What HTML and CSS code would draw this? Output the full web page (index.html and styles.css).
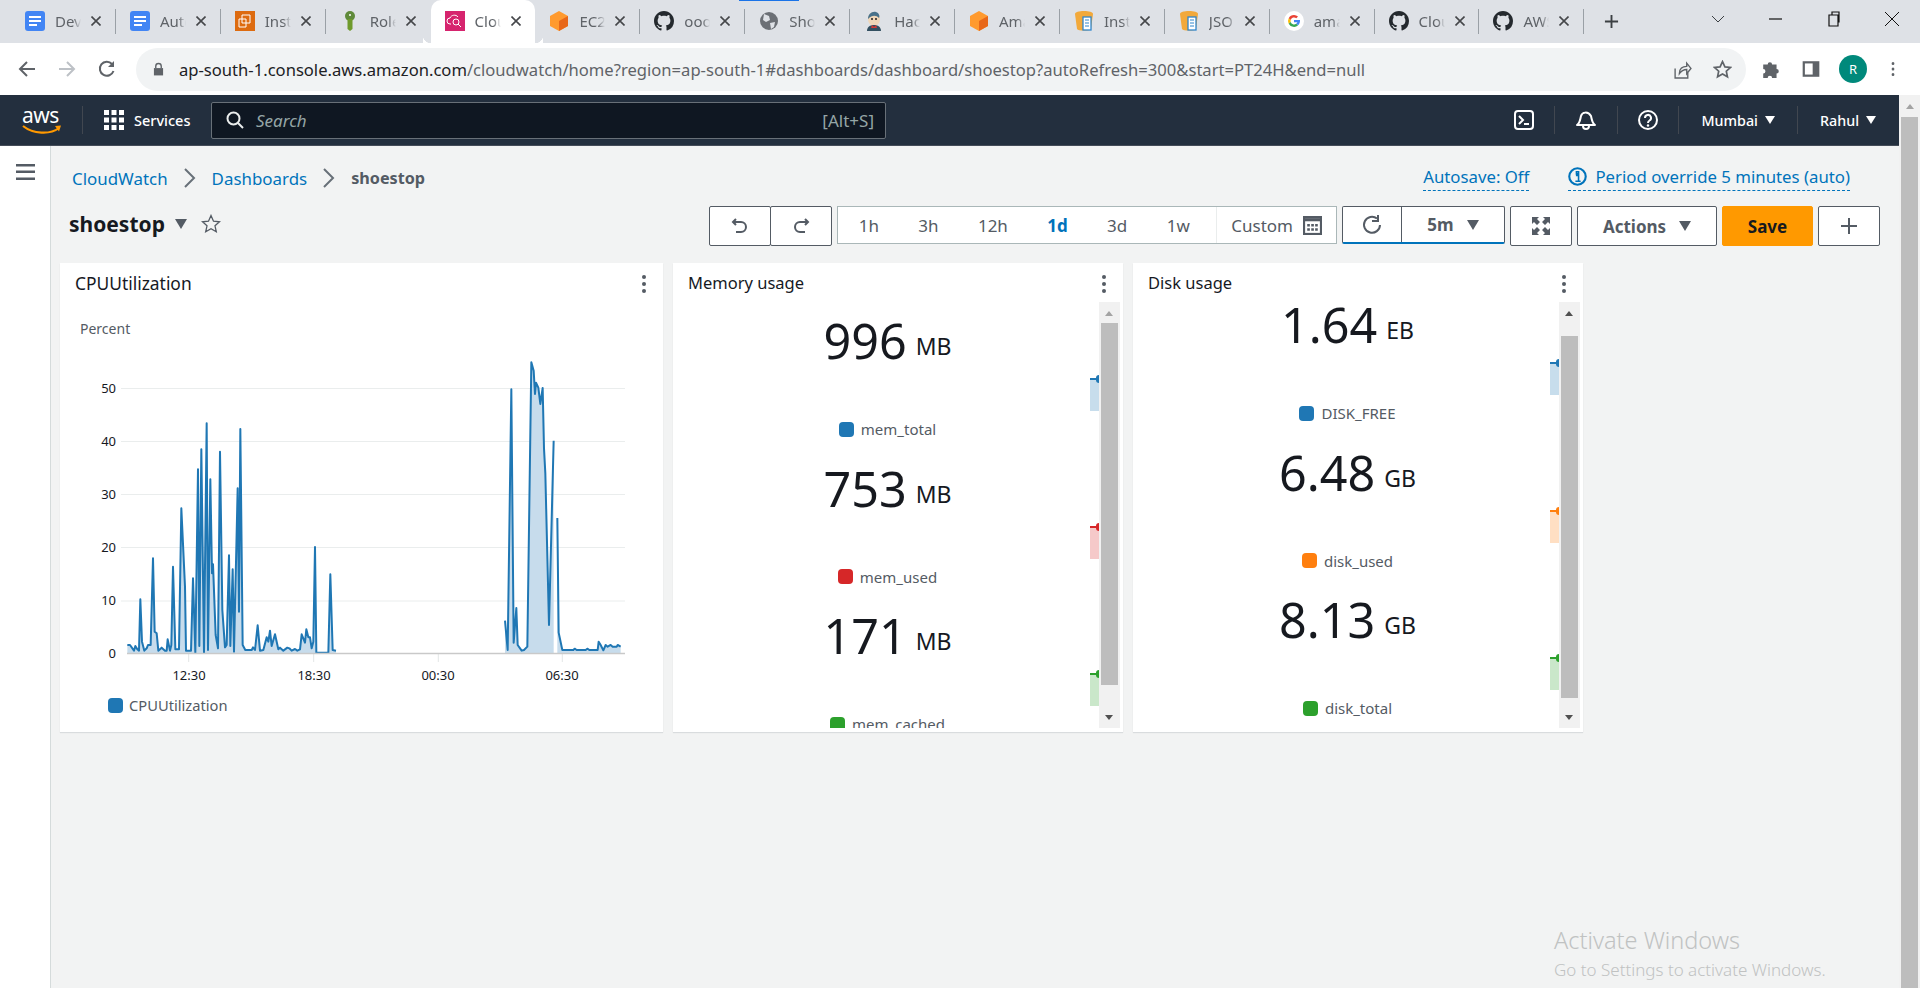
FILE: index.html
```html
<!DOCTYPE html>
<html lang="en">
<head>
    <meta charset="UTF-8">
    <title>CloudWatch - shoestop</title>
    <link rel="stylesheet" href="styles.css">
</head>
<body>
    <svg class="sprite" width="0" height="0">
        <symbol id="i-doc" viewBox="0 0 20 20"><rect width="20" height="20" rx="3" fill="#4285f4"/><path d="M4 5h12v2H4zM4 9h12v2H4zM4 13h8v2H4z" fill="#fff"/></symbol>
        <symbol id="i-ec2" viewBox="0 0 20 20"><rect width="20" height="20" fill="#dd6b10"/><path d="M7 4h8v8H7zM4 8h7v8H4z" fill="none" stroke="#fff" stroke-width="1"/></symbol>
        <symbol id="i-key" viewBox="0 0 20 20"><circle cx="10" cy="5" r="5" fill="#5f8a3a"/><path d="M7.500 8h5v10l-2.500 2-2.500-2z" fill="#6f9a2c"/><circle cx="10" cy="4" r="1" fill="#fff"/></symbol>
        <symbol id="i-cw" viewBox="0 0 20 20"><rect width="20" height="20" fill="#d6246e"/><path d="M6 13H5a3 3 0 0 1 0-6c1-3 6-4 8-1" fill="none" stroke="#fff"/><circle cx="11" cy="11" r="3" fill="none" stroke="#fff"/><path d="M13 13l3 3" stroke="#fff"/></symbol>
        <symbol id="i-box" viewBox="0 0 20 20"><path d="M10 0l9 5v10l-9 5-9-5V5z" fill="#ff9a2e"/><path d="M10 10l9-5v10l-9 5z" fill="#e8681a"/></symbol>
        <symbol id="i-gh" viewBox="0 0 16 16"><path fill="#24292e" d="M8 0C3.58 0 0 3.58 0 8c0 3.540 2.290 6.530 5.470 7.590.4.070.550-.170.550-.380 0-.190-.010-.820-.010-1.490-2.010.370-2.530-.490-2.690-.940-.090-.230-.480-.940-.820-1.130-.280-.150-.680-.520-.010-.530.630-.010 1.080.580 1.230.820.720 1.210 1.870.870 2.330.660.070-.520.280-.870.510-1.070-1.780-.200-3.640-.890-3.640-3.950 0-.870.310-1.590.820-2.150-.080-.200-.360-1.020.080-2.120 0 0 .670-.210 2.200.820.640-.180 1.320-.270 2-.270s1.360.090 2 .270c1.530-1.040 2.200-.820 2.200-.820.440 1.100.160 1.920.080 2.120.510.560.820 1.270.820 2.150 0 3.070-1.870 3.750-3.650 3.950.290.250.540.730.540 1.480 0 1.070-.010 1.930-.010 2.200 0 .210.150.460.550.380A8.010 8.010 0 0 0 16 8c0-4.420-3.580-8-8-8z"/></symbol>
        <symbol id="i-globe" viewBox="0 0 20 20"><circle cx="10" cy="10" r="9" fill="#6b6f75"/><path d="M5 3l5 2 1 4-4 2-3-2zM11 12l5-1-1 5-3 2z" fill="#dee1e6"/></symbol>
        <symbol id="i-jenkins" viewBox="0 0 20 20"><ellipse cx="10" cy="8" rx="6" ry="7" fill="#f0d6b7"/><path d="M4 8c0-5 4-8 8-7 3 1 4 4 3 6-3-3-7-3-11 1z" fill="#49728b"/><path d="M3 20c0-4 3-6 7-6s7 2 7 6z" fill="#335061"/><path d="M8 14l2 2 2-2 1 3H7z" fill="#d33833"/><circle cx="8" cy="8" r="1" fill="#231f20"/><circle cx="12" cy="8" r="1" fill="#231f20"/></symbol>
        <symbol id="i-s3" viewBox="0 0 20 20"><path d="M10 0c5 0 9 1 9 3l-2 15c-1 2-13 2-14 0L1 3c0-2 4-3 9-3z" fill="#f2a93b"/><rect x="9" y="6" width="8" height="13" fill="#fff" stroke="#2f86cc" stroke-width="1.300"/><path d="M11 9h4M11 12h4M11 15h4" stroke="#2f86cc"/></symbol>
        <symbol id="i-google" viewBox="0 0 20 20"><circle cx="10" cy="10" r="10" fill="#fff"/><path d="M10 4a6 6 0 0 1 4 1.500l-1.700 1.700A3.500 3.500 0 0 0 6.700 9L4.700 7.300A6 6 0 0 1 10 4z" fill="#ea4335"/><path d="M4.700 7.300L6.700 9a3.500 3.500 0 0 0 0 2l-2 1.700a6 6 0 0 1 0-5.400z" fill="#fbbc05"/><path d="M4.700 12.700l2-1.700a3.500 3.500 0 0 0 5.500 1.800l1.900 1.500A6 6 0 0 1 4.700 12.700z" fill="#34a853"/><path d="M16 9h-6v2.300h3.400a3 3 0 0 1-1.200 1.500l1.900 1.500c1.300-1.200 2.100-3.300 1.900-5.300z" fill="#4285f4"/></symbol>
        <symbol id="i-x" viewBox="0 0 10 10"><path d="M.5.500l9 9M9.500.500l-9 9" stroke="#45474a" stroke-width="1.600" fill="none"/></symbol>
        <symbol id="i-dots" viewBox="0 0 4 18"><circle cx="2" cy="2" r="2"/><circle cx="2" cy="9" r="2"/><circle cx="2" cy="16" r="2"/></symbol>
    </svg>

    <div class="tabstrip">
        <div class="tab"><svg class="tab-icon"><use href="#i-doc"/></svg><span class="tab-title">Dev</span><svg class="tab-x"><use href="#i-x"/></svg></div>
        <div class="tab"><svg class="tab-icon"><use href="#i-doc"/></svg><span class="tab-title">Auto</span><svg class="tab-x"><use href="#i-x"/></svg></div>
        <div class="tab"><svg class="tab-icon"><use href="#i-ec2"/></svg><span class="tab-title">Insta</span><svg class="tab-x"><use href="#i-x"/></svg></div>
        <div class="tab tab-before-active"><svg class="tab-icon"><use href="#i-key"/></svg><span class="tab-title">Role</span><svg class="tab-x"><use href="#i-x"/></svg></div>
        <div class="tab tab-active"><svg class="tab-icon"><use href="#i-cw"/></svg><span class="tab-title">Clou</span><svg class="tab-x"><use href="#i-x"/></svg></div>
        <div class="tab"><svg class="tab-icon"><use href="#i-box"/></svg><span class="tab-title">EC2</span><svg class="tab-x"><use href="#i-x"/></svg></div>
        <div class="tab"><svg class="tab-icon"><use href="#i-gh"/></svg><span class="tab-title">ooo</span><svg class="tab-x"><use href="#i-x"/></svg></div>
        <div class="tab tab-loading"><svg class="tab-icon"><use href="#i-globe"/></svg><span class="tab-title">Sho</span><svg class="tab-x"><use href="#i-x"/></svg></div>
        <div class="tab"><svg class="tab-icon"><use href="#i-jenkins"/></svg><span class="tab-title">Hac</span><svg class="tab-x"><use href="#i-x"/></svg></div>
        <div class="tab"><svg class="tab-icon"><use href="#i-box"/></svg><span class="tab-title">Ama</span><svg class="tab-x"><use href="#i-x"/></svg></div>
        <div class="tab"><svg class="tab-icon"><use href="#i-s3"/></svg><span class="tab-title">Inst</span><svg class="tab-x"><use href="#i-x"/></svg></div>
        <div class="tab"><svg class="tab-icon"><use href="#i-s3"/></svg><span class="tab-title">JSO</span><svg class="tab-x"><use href="#i-x"/></svg></div>
        <div class="tab"><svg class="tab-icon"><use href="#i-google"/></svg><span class="tab-title">ama</span><svg class="tab-x"><use href="#i-x"/></svg></div>
        <div class="tab"><svg class="tab-icon"><use href="#i-gh"/></svg><span class="tab-title">Clou</span><svg class="tab-x"><use href="#i-x"/></svg></div>
        <div class="tab"><svg class="tab-icon"><use href="#i-gh"/></svg><span class="tab-title">AWS</span><svg class="tab-x"><use href="#i-x"/></svg></div>
        <svg class="new-tab" viewBox="0 0 16 16"><path d="M8 1v14M1 8h14" stroke="#3c4043" stroke-width="2"/></svg>
        <div class="window-controls">
            <svg class="win-btn" viewBox="0 0 16 16"><path d="M2 5l6 6 6-6" fill="none" stroke="#3c4043"/></svg>
            <svg class="win-btn" viewBox="0 0 16 16"><path d="M1 8h13" stroke="#111" stroke-width="1.200"/></svg>
            <svg class="win-btn" viewBox="0 0 16 16"><path d="M3 4h9v11H3zM6 4V1h7v10h-1" fill="none" stroke="#111" stroke-width="1.200"/></svg>
            <svg class="win-btn" viewBox="0 0 16 16"><path d="M1 1l14 14M15 1L1 15" stroke="#111"/></svg>
        </div>
    </div>

    <div class="toolbar">
        <svg class="tool-icon" viewBox="0 0 18 18"><path d="M17 9H3M9 2L2 9l7 7" fill="none" stroke="#5f6368" stroke-width="2"/></svg>
        <svg class="tool-icon" viewBox="0 0 18 18"><path d="M1 9h14M9 2l7 7-7 7" fill="none" stroke="#bdc1c6" stroke-width="2"/></svg>
        <svg class="tool-icon" viewBox="0 0 18 18"><path d="M15.500 11A7 7 0 1 1 14 4" fill="none" stroke="#5f6368" stroke-width="2"/><path d="M16 1v6h-6z" fill="#5f6368"/></svg>
        <div class="omnibox">
            <svg class="lock" viewBox="0 0 12 14"><path d="M1 6h10v8H1z" fill="#5f6368"/><path d="M3 6V4a3 3 0 0 1 6 0v2" fill="none" stroke="#5f6368" stroke-width="1.500"/></svg>
            <span class="url"><span class="url-host">ap-south-1.console.aws.amazon.com</span>/cloudwatch/home?region=ap-south-1#dashboards/dashboard/shoestop?autoRefresh=300&amp;start=PT24H&amp;end=null</span>
            <svg class="omni-icon" viewBox="0 0 18 18"><path d="M2 8v9h12v-5" fill="none" stroke="#5f6368" stroke-width="1.300"/><path d="M6 13c0-5 3-7 7-7V3l4 5-4 5V9c-3 0-5 1-7 4z" fill="none" stroke="#5f6368" stroke-width="1.300"/></svg>
            <svg class="omni-icon" viewBox="0 0 18 18"><path d="M9 1.500l2.300 5 5.200.600-3.900 3.500 1.100 5.300L9 13.200l-4.700 2.700 1.100-5.300L1.500 7.100l5.200-.600z" fill="none" stroke="#5f6368" stroke-width="1.600"/></svg>
        </div>
        <svg class="ext-icon" viewBox="0 0 18 18"><path d="M2 5h4a2 2 0 0 1 4 0h4v4a2 2 0 0 1 0 4v4h-4a2 2 0 0 0-4 0H2v-4a2 2 0 0 0 0-4z" fill="#5f6368"/></svg>
        <svg class="ext-icon" viewBox="0 0 18 18"><rect x="1.500" y="2" width="15" height="14" fill="#5f6368"/><rect x="3.500" y="4" width="7" height="10" fill="#fff"/></svg>
        <div class="avatar">R</div>
        <svg class="menu-dots" viewBox="0 0 4 18" fill="#5f6368"><use href="#i-dots"/></svg>
    </div>

    <div class="viewport">
        <div class="app">
            <nav class="topnav">
                <div class="aws-logo">
                    <span class="aws-word">aws</span>
                    <svg class="aws-smile" viewBox="0 0 40 11"><path d="M1 1c10 8 27 9 36 2" fill="none" stroke="#ff9900" stroke-width="2.200"/><path d="M33 1l6-.500-2 6z" fill="#ff9900"/></svg>
                </div>
                <div class="services">
                    <svg class="grid-icon" viewBox="0 0 20 20" fill="#fff"><path d="M0 0h5v5H0zM7.500 0h5v5h-5zM15 0h5v5h-5zM0 7.500h5v5H0zM7.500 7.500h5v5h-5zM15 7.500h5v5h-5zM0 15h5v5H0zM7.500 15h5v5h-5zM15 15h5v5h-5z"/></svg>
                    <span>Services</span>
                </div>
                <div class="searchbox">
                    <svg class="search-icon" viewBox="0 0 18 18"><circle cx="7.500" cy="7.500" r="6" fill="none" stroke="#eaeded" stroke-width="2"/><path d="M12 12l5 5" stroke="#eaeded" stroke-width="2"/></svg>
                    <span class="search-text">Search</span>
                    <span class="search-key">[Alt+S]</span>
                </div>
                <div class="nav-right">
                    <div class="nav-item nav-cloudshell">
                        <svg class="nav-icon" viewBox="0 0 20 20"><rect x="1" y="1" width="18" height="18" rx="3" fill="none" stroke="#fff" stroke-width="2"/><path d="M5 6l4 4-4 4M10 14h5" fill="none" stroke="#fff" stroke-width="2"/></svg>
                    </div>
                    <div class="nav-item nav-bell">
                        <svg class="nav-icon" viewBox="0 0 20 20"><path d="M1 15c3-2 3-5 4-9s7-5 10 0c1 4 1 7 4 9z" fill="none" stroke="#fff" stroke-width="2" stroke-linejoin="round"/><path d="M7 16a3 3 0 0 0 6 0" fill="none" stroke="#fff" stroke-width="2"/></svg>
                    </div>
                    <div class="nav-item nav-help">
                        <svg class="nav-icon" viewBox="0 0 20 20"><circle cx="10" cy="10" r="9" fill="none" stroke="#fff" stroke-width="2"/><path d="M7 8a3 3 0 1 1 4.500 2.500c-1 .600-1.500 1-1.500 2.500" fill="none" stroke="#fff" stroke-width="2"/><circle cx="10" cy="15.500" r="1.200" fill="#fff"/></svg>
                    </div>
                    <div class="nav-item nav-region"><span>Mumbai</span><i class="caret"></i></div>
                    <div class="nav-item nav-user"><span>Rahul</span><i class="caret"></i></div>
                </div>
            </nav>

            <div class="page">
                <aside class="sidebar">
                    <svg class="hamburger" viewBox="0 0 19 16" fill="#545b64"><path d="M0 0h19v2.500H0zM0 6.500h19V9H0zM0 13.500h19V16H0z"/></svg>
                </aside>
                <main class="main">
                    <div class="crumb-row">
                        <a class="crumb">CloudWatch</a>
                        <svg class="crumb-sep" viewBox="0 0 12 20"><path d="M1 1l9 9-9 9" fill="none" stroke="#687078" stroke-width="2"/></svg>
                        <a class="crumb">Dashboards</a>
                        <svg class="crumb-sep" viewBox="0 0 12 20"><path d="M1 1l9 9-9 9" fill="none" stroke="#687078" stroke-width="2"/></svg>
                        <span class="crumb-current">shoestop</span>
                        <a class="autosave">Autosave: Off</a>
                        <a class="period">
                            <svg class="info-icon" viewBox="0 0 18 18"><circle cx="9" cy="9" r="7.800" fill="none" stroke="#0073bb" stroke-width="2"/><path d="M7.500 8h2.500v5M7 13.500h5M8 4.500h2v2H8z" fill="none" stroke="#0073bb" stroke-width="1.500"/></svg>
                            Period override 5 minutes (auto)
                        </a>
                    </div>

                    <div class="title-row">
                        <h1 class="dash-title">shoestop</h1>
                        <i class="title-caret"></i>
                        <svg class="title-star" viewBox="0 0 20 20"><path d="M10 1.500l2.500 5.700 6 .600-4.500 4 1.300 6L10 14.700l-5.300 3.100 1.300-6-4.500-4 6-.600z" fill="none" stroke="#545b64" stroke-width="1.300"/></svg>

                        <div class="actions">
                            <div class="btn-pair">
                                <button class="btn btn-icon"><svg class="btn-svg" viewBox="0 0 18 18"><path d="M5 2L2 5l3 3" fill="none" stroke="#545b64" stroke-width="2"/><path d="M3 5h7a4.500 4.500 0 0 1 0 10H5" fill="none" stroke="#545b64" stroke-width="2"/></svg></button>
                                <button class="btn btn-icon"><svg class="btn-svg" viewBox="0 0 18 18"><path d="M13 2l3 3-3 3" fill="none" stroke="#545b64" stroke-width="2"/><path d="M15 5H8a4.500 4.500 0 0 0 0 10h5" fill="none" stroke="#545b64" stroke-width="2"/></svg></button>
                            </div>
                            <div class="range">
                                <span class="range-item">1h</span>
                                <span class="range-item">3h</span>
                                <span class="range-item">12h</span>
                                <span class="range-item range-on">1d</span>
                                <span class="range-item">3d</span>
                                <span class="range-item">1w</span>
                                <span class="range-custom">Custom
                                    <svg class="cal-icon" viewBox="0 0 18 18"><rect x="1" y="1" width="16" height="16" fill="none" stroke="#545b64" stroke-width="2"/><path d="M1 2h16v3H1z" fill="#545b64"/><path d="M4 7.500h2.500V10H4zM7.800 7.500h2.500V10H7.800zM11.500 7.500H14V10h-2.500zM4 11.500h2.500V14H4zM7.800 11.500h2.500V14H7.800zM11.500 11.500H14V14h-2.500z" fill="#545b64"/></svg>
                                </span>
                            </div>
                            <div class="refresh-group">
                                <button class="btn-refresh"><svg class="refresh-svg" viewBox="0 0 20 20"><path d="M15 3.500A8 8 0 1 0 18 10" fill="none" stroke="#545b64" stroke-width="2"/><path d="M16 0v6h-6" fill="none" stroke="#545b64" stroke-width="2"/></svg></button>
                                <button class="btn-interval">5m<i class="btn-caret"></i></button>
                            </div>
                            <button class="btn btn-icon btn-full"><svg class="btn-svg" viewBox="0 0 18 18" fill="#545b64"><path d="M0 0h7L5 2l3 3-3 3-3-3-2 2zM18 0v7l-2-2-3 3-3-3 3-3-2-2zM0 18v-7l2 2 3-3 3 3-3 3 2 2zM18 18h-7l2-2-3-3 3-3 3 3 2-2z"/></svg></button>
                            <button class="btn btn-actions">Actions<i class="btn-caret"></i></button>
                            <button class="btn btn-save">Save</button>
                            <button class="btn btn-icon btn-add"><svg class="btn-svg" viewBox="0 0 18 18"><path d="M9 1v16M1 9h16" stroke="#545b64" stroke-width="2"/></svg></button>
                        </div>
                    </div>

                    <div class="widgets">
                        <section class="widget widget-cpu">
                            <header class="widget-head"><span class="widget-title">CPUUtilization</span><svg class="widget-menu" viewBox="0 0 4 18" fill="#545b64"><use href="#i-dots"/></svg></header>
                            <svg class="chart" viewBox="60 302 603 429">
                                <text class="chart-unit" x="80" y="334">Percent</text>
                                <g class="grid">
                                    <path d="M121 388.500H625M121 441.500H625M121 494.500H625M121 547.500H625M121 601H625"/>
                                </g>
                                <g class="ylabels">
                                    <text x="116" y="393">50</text>
                                    <text x="116" y="446">40</text>
                                    <text x="116" y="499">30</text>
                                    <text x="116" y="552">20</text>
                                    <text x="116" y="605">10</text>
                                    <text x="116" y="658">0</text>
                                </g>
                                <path class="ticks" d="M188.700 654v8M313.700 654v8M438.300 654v8M562.300 654v8"/>
                                <g class="xlabels">
                                    <text x="189" y="680">12:30</text>
                                    <text x="314" y="680">18:30</text>
                                    <text x="438" y="680">00:30</text>
                                    <text x="562" y="680">06:30</text>
                                </g>
                                <g transform="translate(50 320) scale(.33333)">
                                    <polygon class="area" points="232,1000 232,975 240,975 252,992 256,978 262,988 267,992 271,838 276,965 283,992 290,985 294,975 302,975 309,715 314,935 320,940 325,992 335,983 345,992 350,992 353,958 360,992 364,975 369,740 376,988 387,988 394,565 405,800 408,992 423,992 429,775 436,998 444,448 448,978 454,388 462,998 470,310 474,990 481,478 486,760 489,733 497,945 504,985 510,395 517,870 525,982 530,975 537,706 541,978 548,748 552,995 563,505 567,875 571,327 578,975 586,990 605,990 609,982 615,990 623,916 630,992 640,990 650,952 655,965 660,932 665,978 675,943 685,988 690,983 700,992 712,983 718,985 725,992 735,987 742,992 750,988 755,943 765,968 769,928 775,952 780,952 785,985 790,965 795,681 799,998 835,998 841,763 848,990 858,992 858,1000"/>
                                    <polyline class="line" points="232,975 240,975 252,992 256,978 262,988 267,992 271,838 276,965 283,992 290,985 294,975 302,975 309,715 314,935 320,940 325,992 335,983 345,992 350,992 353,958 360,992 364,975 369,740 376,988 387,988 394,565 405,800 408,992 423,992 429,775 436,998 444,448 448,978 454,388 462,998 470,310 474,990 481,478 486,760 489,733 497,945 504,985 510,395 517,870 525,982 530,975 537,706 541,978 548,748 552,995 563,505 567,875 571,327 578,975 586,990 605,990 609,982 615,990 623,916 630,992 640,990 650,952 655,965 660,932 665,978 675,943 685,988 690,983 700,992 712,983 718,985 725,992 735,987 742,992 750,988 755,943 765,968 769,928 775,952 780,952 785,985 790,965 795,681 799,998 835,998 841,763 848,990 858,992"/>
                                </g>
                                <g transform="translate(350 320) scale(.33333)">
                                    <polygon class="area" points="465,1000 465,902 473,990 484,208 491,968 499,864 503,975 515,992 522,990 532,980 544,127 551,152 555,222 558,188 565,203 571,252 578,204 582,385 586,460 597,915 611,362 611,1000"/>
                                    <polygon class="area" points="622,1000 622,594 626,938 637,990 670,990 674,986 680,990 707,990 712,986 718,990 743,990 746,965 752,975 760,991 767,975 773,980 782,975 788,980 800,980 803,975 812,980 812,1000"/>
                                    <polyline class="line" points="465,902 473,990 484,208 491,968 499,864 503,975 515,992 522,990 532,980 544,127 551,152 555,222 558,188 565,203 571,252 578,204 582,385 586,460 597,915 611,362"/>
                                    <polyline class="line" points="622,594 626,938 637,990 670,990 674,986 680,990 707,990 712,986 718,990 743,990 746,965 752,975 760,991 767,975 773,980 782,975 788,980 800,980 803,975 812,980"/>
                                </g>
                                <path class="baseline" d="M127 653.500H625"/>
                                <rect class="legend-swatch" x="108" y="698" width="15" height="15" rx="4"/>
                                <text class="legend-text" x="129" y="711">CPUUtilization</text>
                            </svg>
                        </section>

                        <section class="widget widget-stat">
                            <header class="widget-head"><span class="widget-title">Memory usage</span><svg class="widget-menu" viewBox="0 0 4 18" fill="#545b64"><use href="#i-dots"/></svg></header>
                            <div class="stat-view">
                                <div class="stat-list">
                                    <div class="stat"><div class="stat-value">996<span class="stat-unit">MB</span></div><div class="stat-legend"><i class="swatch blue"></i>mem_total</div><div class="spark blue"></div></div>
                                    <div class="stat"><div class="stat-value">753<span class="stat-unit">MB</span></div><div class="stat-legend"><i class="swatch red"></i>mem_used</div><div class="spark red"></div></div>
                                    <div class="stat"><div class="stat-value">171<span class="stat-unit">MB</span></div><div class="stat-legend"><i class="swatch green"></i>mem_cached</div><div class="spark green"></div></div>
                                </div>
                                <div class="vscroll vscroll-mem"><i class="arrow-up arrow-dim"></i><div class="vthumb"></div><i class="arrow-down"></i></div>
                            </div>
                        </section>

                        <section class="widget widget-stat">
                            <header class="widget-head"><span class="widget-title">Disk usage</span><svg class="widget-menu" viewBox="0 0 4 18" fill="#545b64"><use href="#i-dots"/></svg></header>
                            <div class="stat-view">
                                <div class="stat-list stat-list-scrolled">
                                    <div class="stat"><div class="stat-value">1.64<span class="stat-unit">EB</span></div><div class="stat-legend"><i class="swatch blue"></i>DISK_FREE</div><div class="spark blue"></div></div>
                                    <div class="stat"><div class="stat-value">6.48<span class="stat-unit">GB</span></div><div class="stat-legend"><i class="swatch orange"></i>disk_used</div><div class="spark orange"></div></div>
                                    <div class="stat"><div class="stat-value">8.13<span class="stat-unit">GB</span></div><div class="stat-legend"><i class="swatch green"></i>disk_total</div><div class="spark green"></div></div>
                                </div>
                                <div class="vscroll vscroll-disk"><i class="arrow-up"></i><div class="vthumb"></div><i class="arrow-down"></i></div>
                            </div>
                        </section>
                    </div>
                    <div class="activate">
                        <div class="activate-title">Activate Windows</div>
                        <div class="activate-sub">Go to Settings to activate Windows.</div>
                    </div>
                </main>
            </div>
        </div>
        <div class="page-scroll">
            <i class="arrow-up arrow-dim"></i>
            <div class="page-thumb"></div>
        </div>
    </div>
</body>
</html>
```

FILE: styles.css
```css
* {
    box-sizing: border-box;
}

html, body {
    margin: 0;
    height: 100%;
    overflow: hidden;
}

body {
    font-family: "Noto Sans", sans-serif;
    background: #fff;
    color: #16191f;
    display: flex;
    flex-direction: column;
}

.sprite {
    position: absolute;
}

/* browser chrome */
.tabstrip {
    height: 43px;
    flex: none;
    background: #dee1e6;
    display: flex;
    padding-left: 11px;
    position: relative;
}

.tab {
    width: 104.9px;
    height: 43px;
    flex: none;
    display: flex;
    align-items: center;
    padding: 0 0 2px 14px;
    position: relative;
}

.tab::after {
    content: "";
    position: absolute;
    right: 0;
    top: 9px;
    width: 1px;
    height: 25px;
    background: #9aa0a6;
}

.tab-before-active::after {
    display: none;
}

.tab-active {
    background: #fff;
    border-radius: 10px 10px 0 0;
}

.tab-active::before,
.tab-active::after {
    content: "";
    position: absolute;
    bottom: 0;
    top: auto;
    width: 8px;
    height: 8px;
    background: radial-gradient(circle at 0 0, #dee1e6 8px, #fff 8.5px);
}

.tab-active::before {
    left: -8px;
    transform: scaleX(-1);
}

.tab-active::after {
    right: -8px;
}

.tab-loading::before {
    content: "";
    position: absolute;
    left: -6px;
    top: 0;
    width: 60px;
    height: 1px;
    background: #1a73e8;
}

.tab-icon {
    width: 20px;
    height: 20px;
    flex: none;
}

.tab-title {
    width: 26px;
    margin-left: 10px;
    font-size: 15px;
    color: #5f6368;
    white-space: nowrap;
    overflow: hidden;
    -webkit-mask-image: linear-gradient(to right, #000 70%, transparent);
    mask-image: linear-gradient(to right, #000 70%, transparent);
}

.tab-x {
    width: 10px;
    height: 10px;
    margin-left: 10px;
    flex: none;
}

.new-tab {
    width: 15px;
    height: 15px;
    margin: 14px 0 0 20px;
}

.window-controls {
    display: flex;
    margin-left: auto;
    padding: 11px 20px 0 0;
    height: 43px;
    gap: 42px;
}

.win-btn {
    width: 16px;
    height: 16px;
}

.toolbar {
    height: 52px;
    flex: none;
    background: #fff;
    display: flex;
    align-items: center;
    padding-left: 18px;
}

.tool-icon {
    width: 18px;
    height: 18px;
    margin-right: 22px;
    flex: none;
}

.omnibox {
    width: 1610px;
    height: 43px;
    margin-left: -2px;
    background: #f1f3f4;
    border-radius: 22px;
    display: flex;
    align-items: center;
    padding-left: 17px;
    flex: none;
}

.lock {
    width: 11px;
    height: 14px;
    flex: none;
}

.url {
    margin-left: 15px;
    font-size: 16.6px;
    color: #5f6368;
    white-space: nowrap;
}

.url-host {
    color: #202124;
}

.omni-icon {
    width: 19px;
    height: 19px;
    flex: none;
    margin-left: 21px;
}

.omni-icon:nth-of-type(2) {
    margin-left: auto;
}

.omni-icon:last-child {
    margin-right: 14px;
}

.ext-icon {
    width: 20px;
    height: 20px;
    flex: none;
    margin-left: 15px;
}

.ext-icon + .ext-icon {
    margin-left: 20px;
}

.avatar {
    width: 28px;
    height: 28px;
    margin-left: 18px;
    border-radius: 50%;
    background: #00897b;
    color: #fff;
    font-size: 13px;
    text-align: center;
    line-height: 28px;
    flex: none;
}

.menu-dots {
    width: 4px;
    height: 14px;
    margin-left: 24px;
    flex: none;
}

/* aws page */
.viewport {
    flex: 1;
    display: flex;
    min-height: 0;
}

.app {
    flex: 1;
    display: flex;
    flex-direction: column;
    min-width: 0;
    background: #f2f3f3;
}

.page-scroll {
    width: 21px;
    flex: none;
    background: #f1f1f1;
    padding-top: 9px;
    display: flex;
    flex-direction: column;
    align-items: center;
}

.page-thumb {
    width: 17px;
    flex: 1;
    margin-top: 8px;
    background: #bdbdbd;
}

.topnav {
    height: 51px;
    flex: none;
    background: #232f3e;
    border-bottom: 1px solid #444c58;
    display: flex;
    align-items: center;
    color: #fff;
    font-size: 14.5px;
}

.aws-logo {
    width: 83px;
    height: 28px;
    padding-left: 22px;
    border-right: 1px solid #414750;
    flex: none;
    position: relative;
}

.aws-word {
    display: block;
    font-size: 21px;
    line-height: 19px;
    letter-spacing: -.5px;
}

.aws-smile {
    display: block;
    width: 40px;
    height: 11px;
}

.services {
    width: 128px;
    display: flex;
    align-items: center;
    flex: none;
    padding-left: 21px;
    font-weight: 500;
}

.grid-icon {
    width: 20px;
    height: 20px;
    margin-right: 10px;
}

.searchbox {
    width: 675px;
    height: 37px;
    flex: none;
    background: #0f1722;
    border: 1px solid #687078;
    border-radius: 2px;
    display: flex;
    align-items: center;
    padding: 0 11px 0 14px;
    font-size: 17px;
    color: #95a5a6;
}

.search-icon {
    width: 18px;
    height: 18px;
    margin-right: 12px;
}

.search-text {
    font-style: italic;
}

.search-key {
    margin-left: auto;
}

.nav-right {
    margin-left: auto;
    display: flex;
    align-items: center;
    height: 28px;
    font-size: 14.3px;
}

.nav-item {
    height: 28px;
    display: flex;
    align-items: center;
    border-left: 1px solid #414750;
    font-weight: 500;
}

.nav-cloudshell {
    border-left: 0;
    padding-right: 20px;
}

.nav-bell {
    padding: 0 21px;
}

.nav-help {
    padding: 0 20px;
}

.nav-region {
    padding: 0 22px;
}

.nav-user {
    padding: 0 23px 0 22px;
}

.nav-icon {
    width: 20px;
    height: 20px;
}

.caret {
    margin-left: 7px;
    border-left: 5px solid transparent;
    border-right: 5px solid transparent;
    border-top: 8px solid #fff;
}

.page {
    flex: 1;
    display: flex;
    min-height: 0;
}

.sidebar {
    width: 51px;
    flex: none;
    background: #fff;
    border-right: 1px solid #d5dbdb;
    padding: 18px 0 0 16px;
}

.hamburger {
    display: block;
    width: 19px;
    height: 16px;
}

.main {
    flex: 1;
    min-width: 0;
    padding: 21px 0 0 9px;
    position: relative;
}

.crumb-row {
    display: flex;
    align-items: center;
    height: 22px;
    padding: 0 49px 0 12px;
    font-size: 16.9px;
    white-space: nowrap;
}

.crumb {
    color: #0073bb;
}

.crumb-sep {
    width: 12px;
    height: 20px;
    margin: 0 16px;
}

.crumb-current {
    font-weight: 700;
    color: #545b64;
    font-size: 16.2px;
}

.autosave {
    margin-left: auto;
    color: #0073bb;
    border-bottom: 1px dashed #0073bb;
    padding-bottom: 2px;
    font-size: 16.8px;
}

.period {
    margin-left: 39px;
    color: #0073bb;
    border-bottom: 1px dashed #0073bb;
    padding-bottom: 2px;
    font-size: 16.8px;
    display: flex;
    align-items: center;
}

.info-icon {
    width: 19px;
    height: 19px;
    margin-right: 8px;
}

.title-row {
    display: flex;
    align-items: center;
    height: 40px;
    margin-top: 17px;
    padding: 0 19px 0 9px;
}

.dash-title {
    margin: 0 0 5px;
    font-size: 21px;
    line-height: 30px;
    font-weight: 700;
}

.title-caret {
    margin: 0 0 5px 10px;
    border-left: 6px solid transparent;
    border-right: 6px solid transparent;
    border-top: 10px solid #545b64;
}

.title-star {
    width: 20px;
    height: 20px;
    margin: 0 0 5px 14px;
}

.actions {
    margin-left: auto;
    display: flex;
    gap: 5px;
    align-items: flex-start;
}

.btn {
    height: 40px;
    background: #fff;
    border: 1px solid #545b64;
    border-radius: 2px;
    font-family: inherit;
    font-size: 17px;
    font-weight: 700;
    color: #545b64;
    padding: 0;
    display: flex;
    align-items: center;
    justify-content: center;
}

.btn-pair {
    display: flex;
}

.btn-pair .btn {
    width: 62px;
}

.btn-pair .btn + .btn {
    margin-left: -1px;
}

.btn-svg {
    width: 18px;
    height: 18px;
}

.btn-full {
    width: 62px;
}

.btn-actions {
    width: 140px;
}

.btn-save {
    width: 91px;
    background: #ff9900;
    border-color: #ff9900;
    color: #16191f;
}

.btn-add {
    width: 62px;
}

.btn-caret {
    margin-left: 13px;
    border-left: 6px solid transparent;
    border-right: 6px solid transparent;
    border-top: 10px solid #545b64;
}

.range {
    width: 500px;
    height: 38px;
    background: #fff;
    border: 1px solid #aab7b8;
    display: flex;
    align-items: center;
    font-size: 17px;
    color: #545b64;
}

.range-item {
    padding: 0 19.7px;
}

.range-item:first-child {
    margin-left: 1px;
}

.range-on {
    color: #0073bb;
    font-weight: 700;
}

.range-custom {
    margin-left: auto;
    height: 100%;
    padding: 0 14px 0 14px;
    border-left: 1px solid #eaeded;
    display: flex;
    align-items: center;
    gap: 10px;
}

.cal-icon {
    width: 19px;
    height: 19px;
}

.refresh-group {
    display: flex;
    height: 38px;
    border: 1px solid #545b64;
    border-bottom: 2px solid #0073bb;
    border-radius: 2px;
    background: #fff;
}

.btn-refresh {
    width: 59px;
    border: 0;
    border-right: 1px solid #545b64;
    background: none;
    padding: 0;
}

.btn-interval {
    width: 102px;
    border: 0;
    background: none;
    padding: 0;
    font-family: inherit;
    font-size: 17px;
    font-weight: 700;
    color: #545b64;
    display: flex;
    align-items: center;
    justify-content: center;
}

.refresh-svg {
    width: 20px;
    height: 20px;
    display: block;
    margin: 0 auto;
}

/* widgets */
.widgets {
    display: flex;
    gap: 10px;
    margin-top: 17px;
}

.widget {
    height: 469px;
    background: #fff;
    box-shadow: 0 1px 1px rgba(0, 22, 37, .1);
    display: flex;
    flex-direction: column;
    overflow: hidden;
}

.widget-cpu {
    width: 603px;
}

.widget-stat {
    width: 450px;
}

.widget-head {
    height: 39px;
    flex: none;
    display: flex;
    align-items: center;
    justify-content: space-between;
    padding: 3px 17px 0 15px;
}

.widget-title {
    margin-top: -3px;
    font-size: 16.5px;
    color: #16191f;
}

.widget-cpu .widget-title {
    font-size: 17.4px;
}

.widget-menu {
    width: 4px;
    height: 18px;
}

.chart {
    display: block;
    width: 603px;
    height: 429px;
    font-family: "Noto Sans", sans-serif;
}

.chart-unit {
    font-size: 14px;
    fill: #545b64;
}

.grid path {
    stroke: #eaeded;
    stroke-width: 1;
    fill: none;
}

.ylabels text {
    font-size: 13px;
    text-anchor: end;
    fill: #16191f;
}

.xlabels text {
    font-size: 13px;
    text-anchor: middle;
    fill: #16191f;
}

.ticks {
    stroke: #e3e6e6;
    fill: none;
}

.baseline {
    stroke: #c9c9c9;
    stroke-width: 1.500;
    fill: none;
}

.area {
    fill: #c7dcec;
}

.line {
    fill: none;
    stroke: #1f77b4;
    stroke-width: 6;
    stroke-linejoin: round;
}

.legend-swatch {
    fill: #1f77b4;
}

.legend-text {
    font-size: 14.7px;
    fill: #545b64;
}

.stat-view {
    height: 426px;
    flex: none;
    position: relative;
    overflow: hidden;
    margin-right: 3px;
}

.stat-list {
    width: 426px;
    padding-top: 10px;
}

.stat-list-scrolled {
    padding-top: 0;
    margin-top: -6px;
}

.stat {
    height: 147.700px;
    position: relative;
    text-align: center;
}

.stat-value {
    height: 56px;
    font-size: 48.500px;
    line-height: 56px;
    color: #16191f;
    white-space: nowrap;
    padding-left: 3px;
}

.stat-unit {
    font-size: 23px;
    margin-left: 9px;
    vertical-align: 4px;
}

.stat-legend {
    height: 18px;
    margin-top: 52px;
    line-height: 18px;
    font-size: 15px;
    color: #545b64;
    display: flex;
    justify-content: center;
    align-items: center;
    gap: 7px;
    padding-left: 3px;
}

.swatch {
    width: 15px;
    height: 15px;
    border-radius: 4px;
    background: currentColor;
}

.spark {
    position: absolute;
    right: 0;
    top: 66px;
    width: 9px;
    height: 33px;
    border-top: 2px solid currentColor;
}

.spark::before {
    content: "";
    position: absolute;
    inset: 0;
    background: currentColor;
    opacity: .25;
}

.spark::after {
    content: "";
    position: absolute;
    right: 0;
    top: -5px;
    width: 3px;
    height: 8px;
    border-radius: 4px 0 0 4px;
    background: currentColor;
}

.blue { color: #1f77b4; }
.red { color: #d62728; }
.green { color: #2ca02c; }
.orange { color: #ff7f0e; }

.stat-legend .swatch.blue { background: #1f77b4; }
.stat-legend .swatch.red { background: #d62728; }
.stat-legend .swatch.green { background: #2ca02c; }
.stat-legend .swatch.orange { background: #ff7f0e; }

.vscroll {
    position: absolute;
    right: 0;
    top: 0;
    bottom: 0;
    width: 21px;
    background: #f1f1f1;
}

.vscroll .arrow-up {
    position: absolute;
    left: 6px;
    top: 9px;
}

.vscroll .arrow-down {
    position: absolute;
    left: 6px;
    bottom: 8px;
}

.vthumb {
    position: absolute;
    left: 2px;
    width: 17px;
    background: #bdbdbd;
}

.vscroll-mem .vthumb {
    top: 21px;
    height: 362px;
}

.vscroll-disk .vthumb {
    top: 34px;
    height: 362px;
}

.arrow-up {
    display: block;
    border-left: 4.500px solid transparent;
    border-right: 4.500px solid transparent;
    border-bottom: 5px solid #505050;
}

.arrow-down {
    display: block;
    border-left: 4.500px solid transparent;
    border-right: 4.500px solid transparent;
    border-top: 5px solid #505050;
}

.arrow-dim {
    border-bottom-color: #a3a3a3;
}

.activate {
    position: absolute;
    left: 1503px;
    top: 779px;
    color: #c0c2c2;
    white-space: nowrap;
}

.activate-title {
    font-size: 23.5px;
    line-height: 30px;
    font-weight: 300;
}

.activate-sub {
    font-size: 17px;
    line-height: 20px;
    margin-top: 5px;
    font-weight: 300;
}
```
